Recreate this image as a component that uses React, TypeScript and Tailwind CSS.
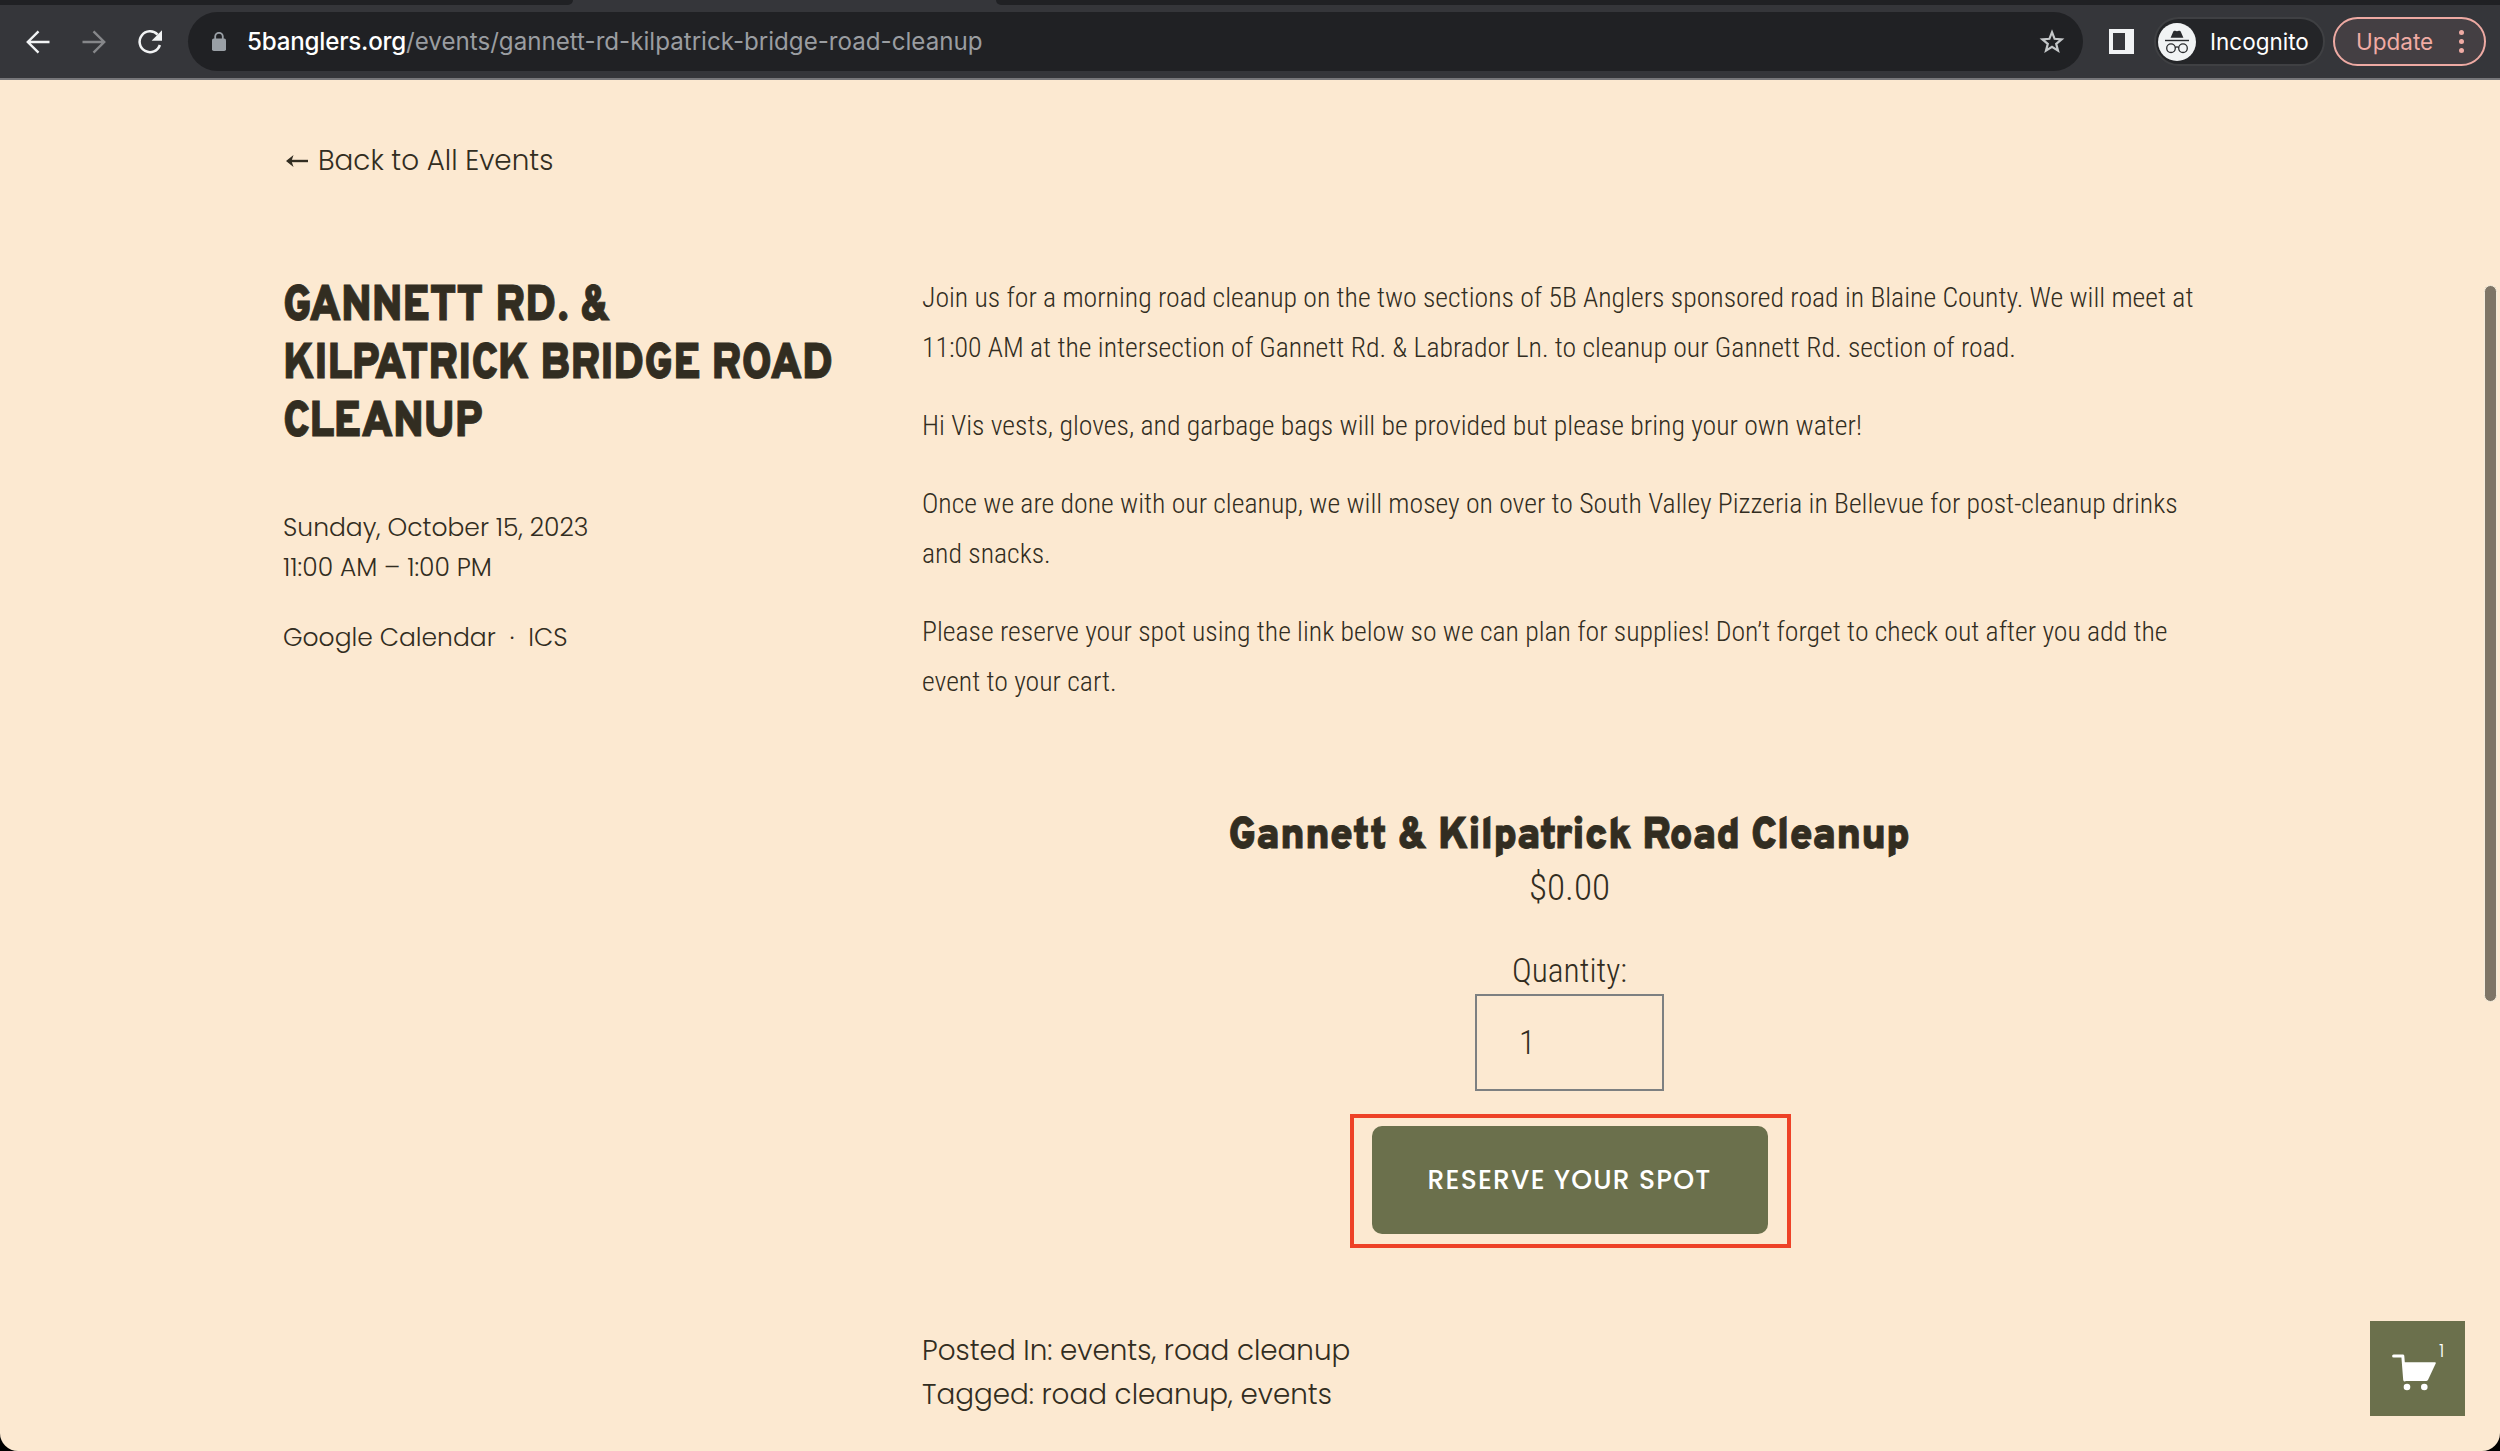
import { useState } from 'react';

const paragraphs = [
  [
    'Join us for a morning road cleanup on the two sections of 5B Anglers sponsored road in Blaine County. We will meet at',
    '11:00 AM at the intersection of Gannett Rd. & Labrador Ln. to cleanup our Gannett Rd. section of road.',
  ],
  [
    'Hi Vis vests, gloves, and garbage bags will be provided but please bring your own water!',
  ],
  [
    'Once we are done with our cleanup, we will mosey on over to South Valley Pizzeria in Bellevue for post-cleanup drinks',
    'and snacks.',
  ],
  [
    'Please reserve your spot using the link below so we can plan for supplies! Don’t forget to check out after you add the',
    'event to your cart.',
  ],
];

const BackIcon = ({ className }: { className: string }) => (
  <svg
    viewBox="0 0 24 24"
    className={className}
    fill="none"
    stroke="currentColor"
    strokeWidth="2.4"
  >
    <path d="M23.5 12H2M12.5 1.3 1.8 12l10.7 10.7" />
  </svg>
);

const ReloadIcon = () => (
  <svg viewBox="0 0 26 26" className="size-[26px]">
    <path
      d="M20.6 5.6A10.4 10.4 0 1 0 22.9 16"
      fill="none"
      stroke="#f1f3f4"
      strokeWidth="2.5"
    />
    <path d="M25 1.3v10.4H14.6z" fill="#f1f3f4" />
  </svg>
);

const LockIcon = () => (
  <svg viewBox="0 0 14 19" className="h-[19px] w-[14px]">
    <rect y="6.5" width="14" height="12.5" rx="1.8" fill="#9aa0a6" />
    <path
      d="M3.2 7V4.6a3.8 3.8 0 0 1 7.6 0V7"
      fill="none"
      stroke="#9aa0a6"
      strokeWidth="1.8"
    />
  </svg>
);

const StarIcon = () => (
  <svg viewBox="0 0 26 26" className="size-[26px]">
    <path
      d="M13 3.2l2.6 6.6 7 .5-5.4 4.5 1.8 6.9-6-3.8-6 3.8 1.8-6.9-5.4-4.5 7-.5z"
      fill="none"
      stroke="#c4c7c9"
      strokeWidth="2.2"
    />
  </svg>
);

const IncognitoIcon = () => (
  <svg viewBox="0 0 38 38" className="size-[38px]">
    <circle cx="19" cy="19" r="19" fill="#f1f3f4" />
    <path
      d="M12.6 14.8l2.7-6.3c.3-.8 1-1 1.8-.7l1.9.5 1.9-.5c.8-.3 1.5-.1 1.8.7l2.7 6.3z"
      fill="#2a2b2e"
    />
    <g stroke="#2a2b2e" fill="none">
      <path d="M7 17.5h24" strokeWidth="1.4" />
      <circle cx="13" cy="25.2" r="4.3" strokeWidth="1.3" />
      <circle cx="25" cy="25.2" r="4.3" strokeWidth="1.3" />
      <path d="M17.2 24.6c1-.8 2.6-.8 3.6 0" strokeWidth="1.3" />
    </g>
  </svg>
);

const CartIcon = () => (
  <svg viewBox="0 0 44 37" className="h-[37px] w-[44px]" fill="#fff">
    <path
      d="M1.6 1.9h9.2l1.9 24"
      fill="none"
      stroke="#fff"
      strokeWidth="3"
      strokeLinecap="round"
      strokeLinejoin="round"
    />
    <path d="M11.6 8.3h31.3c.8 0 1.1.6.8 1.3l-7.5 16c-.4.8-.9 1.3-1.8 1.3H13.2z" />
    <circle cx="15" cy="33" r="3.3" />
    <circle cx="32.3" cy="33" r="3.3" />
  </svg>
);

const Toolbar = () => (
  <header className="border-b-2 border-[#77777a] bg-[#35363a] font-['Inter',sans-serif]">
    <div className="flex h-[5px] justify-between bg-[#35363a]">
      <div className="w-[573px] rounded-br-[5px] bg-[#202124]" />
      <div className="w-[1504px] rounded-bl-[5px] bg-[#202124]" />
    </div>
    <div className="flex h-[73px] items-center pr-[14px] pl-[26px]">
      <BackIcon className="size-6 text-[#f1f3f4]" />
      <BackIcon className="ml-8 size-6 rotate-180 text-[#86878a]" />
      <div className="ml-[31px]">
        <ReloadIcon />
      </div>
      <div className="ml-[25px] flex h-[59px] w-[1895px] items-center rounded-full bg-[#202124] pr-[18px] pl-6">
        <LockIcon />
        <div className="ml-[21px] pt-[2px] text-[24.15px] whitespace-nowrap text-[#9a9da1]">
          <span className="font-medium tracking-[-0.2px] text-white">
            5banglers.org
          </span>
          /events/gannett-rd-kilpatrick-bridge-road-cleanup
        </div>
        <div className="ml-auto">
          <StarIcon />
        </div>
      </div>
      <div className="ml-[26px] size-[25px] border-4 border-r-[9px] border-[#f1f3f4]" />
      <div className="ml-5 flex h-[49px] w-[171px] items-center rounded-full border-2 border-[#3f4043] bg-[#242528] pl-[2px]">
        <IncognitoIcon />
        <span className="ml-[14px] text-[22.5px] text-white">Incognito</span>
      </div>
      <div className="ml-[8px] flex h-[49px] w-[153px] items-center rounded-full border-2 border-[#eeaaa3] bg-[#443f43] pl-[21px] text-[#f0aba4]">
        <span className="text-[22.5px]">Update</span>
        <div className="ml-auto flex flex-col gap-[3.5px] pr-5">
          <i className="size-[5.5px] rounded-full bg-[#f0aba4]" />
          <i className="size-[5.5px] rounded-full bg-[#f0aba4]" />
          <i className="size-[5.5px] rounded-full bg-[#f0aba4]" />
        </div>
      </div>
    </div>
  </header>
);

const EventInfo = () => (
  <div className="pt-[6px] text-[25px] leading-10">
    <h1 className="origin-left scale-x-[0.868] font-['Overpass','Roboto',sans-serif] text-[49px] leading-[58.2px] font-black whitespace-nowrap uppercase [-webkit-text-stroke:0.8px]">
      Gannett Rd. &amp;
      <br />
      Kilpatrick Bridge Road
      <br />
      Cleanup
    </h1>
    <div className="mt-[54px]">Sunday, October 15, 2023</div>
    <div>11:00 AM – 1:00 PM</div>
    <div className="mt-[30px] flex">
      <a>Google Calendar</a>
      <span className="px-[14px]">·</span>
      <a>ICS</a>
    </div>
  </div>
);

const Product = () => {
  const [quantity, setQuantity] = useState('1');

  return (
    <section className="mt-[104px] flex flex-col items-center font-['Roboto_Condensed','Roboto',sans-serif]">
      <h2 className="scale-x-[0.92] font-['Overpass','Roboto',sans-serif] text-[44.4px] leading-[52px] font-black whitespace-nowrap [-webkit-text-stroke:0.8px]">
        Gannett &amp; Kilpatrick Road Cleanup
      </h2>
      <div className="-mt-[2px] text-[37.2px] leading-[52px]">$0.00</div>
      <label className="mt-[38px] text-[33.5px] leading-10">Quantity:</label>
      <input
        value={quantity}
        onChange={e => setQuantity(e.target.value)}
        className="mt-[3px] h-[97px] w-[189px] border-2 border-[#7d8081] pl-[42px] text-[33.5px]"
      />
      <div className="mt-[23px] ml-px flex h-[134px] w-[441px] items-center justify-center border-4 border-[#ee4227] pr-px pb-[2px]">
        <button className="h-[108px] w-[396px] rounded-[10px] bg-[#6b704c] font-['Poppins','Inter',sans-serif] text-[26.6px] font-medium tracking-[1.2px] text-white">
          RESERVE YOUR SPOT
        </button>
      </div>
    </section>
  );
};

const App = () => {
  return (
    <div className="h-[1451px] w-[2500px] overflow-hidden bg-black">
      <div className="relative flex h-full flex-col overflow-hidden rounded-b-[18px] bg-[#fce9d1]">
        <Toolbar />
        <main className="px-[283px] pt-[59px] font-['Poppins','Inter',sans-serif] font-light text-[#322d21]">
          <a className="flex items-center text-[27.8px] leading-[44px]">
            <svg
              viewBox="0 0 24 14"
              className="mr-[9px] ml-[2px] h-[14px] w-6"
              fill="none"
              stroke="currentColor"
              strokeWidth="2.4"
            >
              <path d="M23 7H3" />
              <path d="M8.5 1 1 7l7.5 6L6.5 7z" fill="currentColor" stroke="none" />
            </svg>
            Back to All Events
          </a>
          <div className="mt-[90px] grid grid-cols-[639px_1fr]">
            <EventInfo />
            <div>
              <div className="flex flex-col gap-[27.4px] font-['Roboto_Condensed','Roboto',sans-serif] text-[27.75px] leading-[50.3px] whitespace-nowrap">
                {paragraphs.map(lines => (
                  <p key={lines[0]}>
                    {lines.map(line => (
                      <span key={line} className="block">
                        {line}
                      </span>
                    ))}
                  </p>
                ))}
              </div>
              <Product />
              <div className="mt-[81px] text-[27.8px] leading-[44px]">
                <div>Posted In: events, road cleanup</div>
                <div>Tagged: road cleanup, events</div>
              </div>
            </div>
          </div>
        </main>

        {/* scrollbar thumb */}
        <div className="absolute top-[285px] right-[3px] h-[717px] w-[13px] rounded-full border border-[#f4ecdb] bg-[#7e7566]" />

        {/* floating cart */}
        <div className="absolute right-[35px] bottom-[35px] size-[95px] bg-[#6b704c]">
          <div className="absolute top-[33px] left-[22px]">
            <CartIcon />
          </div>
          <span className="absolute top-[19px] left-[69px] font-['Poppins','Inter',sans-serif] text-[18px] leading-[22px] font-light text-white">
            1
          </span>
        </div>
      </div>
    </div>
  );
};

export default App;
